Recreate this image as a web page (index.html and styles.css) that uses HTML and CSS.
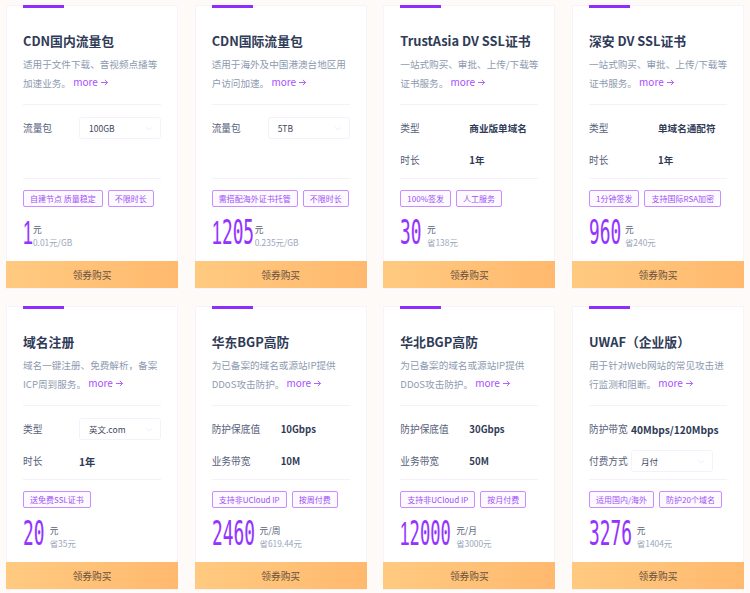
FILE: index.html
```html
<!DOCTYPE html>
<html lang="zh">
<head>
<meta charset="utf-8">
<title>产品</title>
<link rel="stylesheet" href="styles.css">
</head>
<body>
<main class="grid">
  <article class="card">
    <div class="body"><i class="bar"></i><h3>CDN国内流量包</h3>
      <p class="desc">适用于文件下载、音视频点播等<br>加速业务。 <a>more <svg viewBox="0 0 10 8"><path d="M1 4h7.5M5.5 1l3 3-3 3"/></svg></a></p>
      <div class="opts"><div class="row"><span class="k">流量包</span><span class="sel">100GB<svg viewBox="0 0 12 6"><path d="M1 1l5 4 5-4"/></svg></span></div></div>
      <div class="tags"><span>自建节点 质量稳定</span><span>不限时长</span></div>
      <div class="price"><b class="n n1"><i>1</i></b><div class="u"><span>元</span><small>0.01元/GB</small></div></div>
    </div><button>领券购买</button>
  </article>
  <article class="card">
    <div class="body"><i class="bar"></i><h3>CDN国际流量包</h3>
      <p class="desc">适用于海外及中国港澳台地区用<br>户访问加速。 <a>more <svg viewBox="0 0 10 8"><path d="M1 4h7.5M5.5 1l3 3-3 3"/></svg></a></p>
      <div class="opts"><div class="row"><span class="k">流量包</span><span class="sel">5TB<svg viewBox="0 0 12 6"><path d="M1 1l5 4 5-4"/></svg></span></div></div>
      <div class="tags"><span>需搭配海外证书托管</span><span>不限时长</span></div>
      <div class="price"><b class="n n4o"><i>1</i>205</b><div class="u"><span>元</span><small>0.235元/GB</small></div></div>
    </div><button>领券购买</button>
  </article>
  <article class="card">
    <div class="body"><i class="bar"></i><h3>TrustAsia DV SSL证书</h3>
      <p class="desc">一站式购买、审批、上传/下载等<br>证书服务。 <a>more <svg viewBox="0 0 10 8"><path d="M1 4h7.5M5.5 1l3 3-3 3"/></svg></a></p>
      <div class="opts"><div class="row"><span class="k k5">类型</span><strong>商业版单域名</strong></div><div class="row"><span class="k k5">时长</span><strong>1年</strong></div></div>
      <div class="tags"><span>100%签发</span><span>人工服务</span></div>
      <div class="price"><b class="n n2">30</b><div class="u"><span>元</span><small>省138元</small></div></div>
    </div><button>领券购买</button>
  </article>
  <article class="card">
    <div class="body"><i class="bar"></i><h3>深安 DV SSL证书</h3>
      <p class="desc">一站式购买、审批、上传/下载等<br>证书服务。 <a>more <svg viewBox="0 0 10 8"><path d="M1 4h7.5M5.5 1l3 3-3 3"/></svg></a></p>
      <div class="opts"><div class="row"><span class="k k5">类型</span><strong>单域名通配符</strong></div><div class="row"><span class="k k5">时长</span><strong>1年</strong></div></div>
      <div class="tags"><span>1分钟签发</span><span>支持国际RSA加密</span></div>
      <div class="price"><b class="n n3">960</b><div class="u"><span>元</span><small>省240元</small></div></div>
    </div><button>领券购买</button>
  </article>
  <article class="card">
    <div class="body"><i class="bar"></i><h3>域名注册</h3>
      <p class="desc">域名一键注册、免费解析，备案<br>ICP周到服务。 <a>more <svg viewBox="0 0 10 8"><path d="M1 4h7.5M5.5 1l3 3-3 3"/></svg></a></p>
      <div class="opts"><div class="row"><span class="k">类型</span><span class="sel">英文.com<svg viewBox="0 0 12 6"><path d="M1 1l5 4 5-4"/></svg></span></div><div class="row"><span class="k">时长</span><strong>1年</strong></div></div>
      <div class="tags"><span>送免费SSL证书</span></div>
      <div class="price"><b class="n n2">20</b><div class="u"><span>元</span><small>省35元</small></div></div>
    </div><button>领券购买</button>
  </article>
  <article class="card">
    <div class="body"><i class="bar"></i><h3>华东BGP高防</h3>
      <p class="desc">为已备案的域名或源站IP提供<br>DDoS攻击防护。 <a>more <svg viewBox="0 0 10 8"><path d="M1 4h7.5M5.5 1l3 3-3 3"/></svg></a></p>
      <div class="opts"><div class="row"><span class="k k5">防护保底值</span><strong>10Gbps</strong></div><div class="row"><span class="k k5">业务带宽</span><strong>10M</strong></div></div>
      <div class="tags"><span>支持非UCloud IP</span><span>按周付费</span></div>
      <div class="price"><b class="n n4">2460</b><div class="u"><span>元/周</span><small>省619.44元</small></div></div>
    </div><button>领券购买</button>
  </article>
  <article class="card">
    <div class="body"><i class="bar"></i><h3>华北BGP高防</h3>
      <p class="desc">为已备案的域名或源站IP提供<br>DDoS攻击防护。 <a>more <svg viewBox="0 0 10 8"><path d="M1 4h7.5M5.5 1l3 3-3 3"/></svg></a></p>
      <div class="opts"><div class="row"><span class="k k5">防护保底值</span><strong>30Gbps</strong></div><div class="row"><span class="k k5">业务带宽</span><strong>50M</strong></div></div>
      <div class="tags"><span>支持非UCloud IP</span><span>按月付费</span></div>
      <div class="price"><b class="n n5"><i>1</i>2000</b><div class="u"><span>元/月</span><small>省3000元</small></div></div>
    </div><button>领券购买</button>
  </article>
  <article class="card">
    <div class="body"><i class="bar"></i><h3>UWAF（企业版）</h3>
      <p class="desc">用于针对Web网站的常见攻击进<br>行监测和阻断。 <a>more <svg viewBox="0 0 10 8"><path d="M1 4h7.5M5.5 1l3 3-3 3"/></svg></a></p>
      <div class="opts"><div class="row"><span class="k k3">防护带宽</span><strong>40Mbps/120Mbps</strong></div><div class="row"><span class="k k3">付费方式</span><span class="sel">月付<svg viewBox="0 0 12 6"><path d="M1 1l5 4 5-4"/></svg></span></div></div>
      <div class="tags"><span>适用国内/海外</span><span>防护20个域名</span></div>
      <div class="price"><b class="n n4">3276</b><div class="u"><span>元</span><small>省1404元</small></div></div>
    </div><button>领券购买</button>
  </article>
</main>
</body>
</html>
```
FILE: styles.css
```css
* { box-sizing: border-box; }
html, body { margin: 0; height: 593px; overflow: hidden; }
body { background: #fdfaf7; font-family: "Noto Sans CJK SC", "Noto Sans", sans-serif; color: #2f3b57; }
.grid { display: grid; grid-template-columns: repeat(4, 172px); column-gap: 16.67px; row-gap: 17px; padding: 5px 6px 0; }
.card { height: 284px; background: #fff; border: 1px solid #f7f2fb; display: flex; flex-direction: column; }
.body { flex: 1; padding: 0 16px; position: relative; display: flex; flex-direction: column; }
.bar { position: absolute; top: -1px; left: 16px; width: 41px; height: 3px; background: #8f2dff; }
h3 { margin: 25px 0 0; font-size: 12.8px; line-height: 20px; font-weight: 700; color: #2f3b57; white-space: nowrap; }
.desc { margin: 4px 0 0; height: 50px; font-size: 9.6px; line-height: 19px; color: #8d9ab0; border-bottom: 1px solid #f5f1f8; white-space: nowrap; }
.desc a { color: #a64dff; font-size: 10px; line-height: 1; vertical-align: 1px; }
.desc svg { width: 9px; height: 7px; fill: none; stroke: #a64dff; stroke-width: 1; }
.opts { height: 74px; padding-top: 7px; border-bottom: 1px solid #f5f1f8; }
.row { height: 32px; display: flex; align-items: center; font-size: 9.7px; }
.k { width: 56px; color: #55607a; flex: none; }
.k5 { width: 69px; }
.k3 { width: 42px; }
.row strong { font-size: 10.2px; font-weight: 700; white-space: nowrap; }
.row .k5 + strong { font-size: 9.6px; }
.sel { width: 82px; height: 22px; border: 1px solid #f5f0fb; border-radius: 3px; display: flex; align-items: center; justify-content: space-between; padding: 0 7px 0 9px; font-size: 8.5px; color: #3e4860; }
.sel svg { width: 8px; height: 5px; fill: none; stroke: #ece4f6; stroke-width: 1; }
.tags { display: flex; gap: 5px; margin-top: 11px; }
.tags span { height: 17px; line-height: 15px; padding: 0 6px; border: 1px solid #c88dff; border-radius: 2px; background: #fcf9ff; color: #a050f5; font-size: 8px; white-space: nowrap; }
.price { display: flex; align-items: center; margin-top: 12px; height: 28px; }
.n { font-family: "DejaVu Sans Mono", monospace; font-weight: 400; font-size: 33px; line-height: 28px; color: #9433ff; display: inline-block; transform: scaleX(.54); transform-origin: left center; -webkit-text-stroke: .15px #9433ff; flex: none; }
.n i { font-family: "Liberation Sans", sans-serif; font-style: normal; }
.n1 { margin-right: -10.4px; }
.n2 { margin-right: -15px; }
.n3 { margin-right: -25.6px; }
.n4 { margin-right: -33.6px; }
.n4o { margin-right: -37px; }
.n5 { margin-right: -44px; transform: scaleX(.52); }
.u { display: flex; flex-direction: column; margin-left: 2px; line-height: 12px; margin-top: 6px; }
.u span { font-size: 8.7px; color: #55607a; }
.u small { font-size: 8.4px; color: #9aa6bb; white-space: nowrap; }
button { display: block; margin: 0 -1px; width: 172px; height: 27px; border: 0; background: linear-gradient(90deg, #ffca80, #ffb96e); color: #6b5340; font: 9.7px "Noto Sans CJK SC", sans-serif; flex: none; }
```
